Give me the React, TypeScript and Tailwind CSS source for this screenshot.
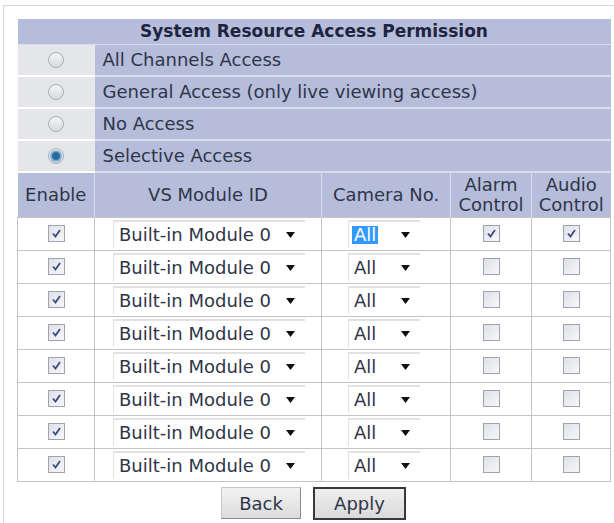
import React from 'react';

const font = { fontFamily: '"DejaVu Sans", Verdana, sans-serif' };

const Radio = ({ checked }: { checked?: boolean }) => (
  <span className="inline-flex h-[16px] w-[16px] items-center justify-center rounded-full border border-[#a9adb5] bg-gradient-to-b from-[#f4f4f4] to-[#d9dbe0]">
    {checked && <span className="h-[8px] w-[8px] rounded-full bg-[#2a6f9c] ring-2 ring-[#7fb4d6]" />}
  </span>
);

const Check = ({ checked }: { checked?: boolean }) => (
  <span className="inline-flex h-[17px] w-[17px] items-center justify-center border border-[#9ea3ad] bg-gradient-to-br from-[#dfe1e8] to-[#f7f7f9]">
    {checked && (
      <svg width="11" height="11" viewBox="0 0 11 11">
        <path d="M2 5.5 L4.5 8.5 L9 2" fill="none" stroke="#3b4a86" strokeWidth="1.8" />
      </svg>
    )}
  </span>
);

const Arrow = () => (
  <svg width="9" height="6" viewBox="0 0 9 6">
    <path d="M0 0 H9 L4.5 6 Z" fill="#111" />
  </svg>
);

const Select = ({ text, width, focus }: { text: string; width: string; focus?: boolean }) => (
  <div className={`inline-flex h-[28px] items-center justify-between border-t-2 border-l border-[#e2e2e2] bg-white pl-[3px] pr-[10px] ${width}`}>
    <span className={focus ? 'bg-[#3399ff] px-[2px] text-white' : 'px-[2px]'}>{text}</span>
    <Arrow />
  </div>
);

const accessRows = [
  { label: 'All Channels Access' },
  { label: 'General Access (only live viewing access)' },
  { label: 'No Access' },
  { label: 'Selective Access', checked: true },
];

const App = () => {
  return (
    <div className="h-[523px] w-[614px] bg-white text-[18px] text-[#2f3548]" style={font}>
      <div className="ml-[3px] mt-[5px] h-[518px] border-l border-t border-[#d6d6d6] pl-[13px] pt-[13px]">
        <table className="w-[593px] table-fixed border-collapse">
          <colgroup>
            <col className="w-[77px]" />
            <col className="w-[227px]" />
            <col className="w-[129px]" />
            <col className="w-[81px]" />
            <col className="w-[79px]" />
          </colgroup>
          <tbody>
            <tr className="h-[25px] bg-[#b6bdda]">
              <td colSpan={5} className="border-b border-[#d9ddeb] text-center text-[17px] font-bold leading-none text-[#1e2440]">
                System Resource Access Permission
              </td>
            </tr>
            {accessRows.map((r) => (
              <tr key={r.label} className="h-[32px]">
                <td className="border-b-2 border-white bg-[#e5e6ea] text-center align-middle">
                  <div className="flex justify-center">
                    <Radio checked={r.checked} />
                  </div>
                </td>
                <td colSpan={4} className="border-b-2 border-[#d9ddeb] bg-[#b6bdda] pl-[8px] align-middle leading-none">
                  {r.label}
                </td>
              </tr>
            ))}
            <tr className="h-[45px] bg-[#b6bdda] text-center leading-[20px]">
              <td className="border-r border-[#d9ddeb]">Enable</td>
              <td className="border-r border-[#d9ddeb]">VS Module ID</td>
              <td className="border-r border-[#d9ddeb]">Camera No.</td>
              <td className="border-r border-[#d9ddeb]">
                Alarm
                <br />
                Control
              </td>
              <td>
                Audio
                <br />
                Control
              </td>
            </tr>
            {Array.from({ length: 8 }).map((_, i) => (
              <tr key={i} className="h-[33px] text-center leading-none">
                <td className="border border-[#c4c4c4] align-middle">
                  <div className="flex justify-center">
                    <Check checked />
                  </div>
                </td>
                <td className="border border-[#c4c4c4] pl-[18px] text-left align-middle">
                  <Select text="Built-in Module 0" width="w-[192px]" />
                </td>
                <td className="border border-[#c4c4c4] pl-[26px] text-left align-middle">
                  <Select text="All" width="w-[72px]" focus={i === 0} />
                </td>
                <td className="border border-[#c4c4c4] align-middle">
                  <div className="flex justify-center">
                    <Check checked={i === 0} />
                  </div>
                </td>
                <td className="border border-[#c4c4c4] align-middle">
                  <div className="flex justify-center">
                    <Check checked={i === 0} />
                  </div>
                </td>
              </tr>
            ))}
          </tbody>
        </table>
        <div className="mt-[5px] flex w-[593px] items-center justify-center gap-[12px]">
          <button className="h-[32px] w-[80px] border border-[#c9c9c9] border-b-[#8a8a8a] border-r-[#8a8a8a] bg-gradient-to-b from-[#f2f2f2] to-[#dcdcdc] text-[18px] text-[#2f3548]">
            Back
          </button>
          <button className="h-[33px] w-[93px] border-2 border-[#3a3a3a] bg-gradient-to-b from-[#efefef] to-[#dadada] text-[18px] text-[#2f3548]">
            Apply
          </button>
        </div>
      </div>
    </div>
  );
};

export default App;
